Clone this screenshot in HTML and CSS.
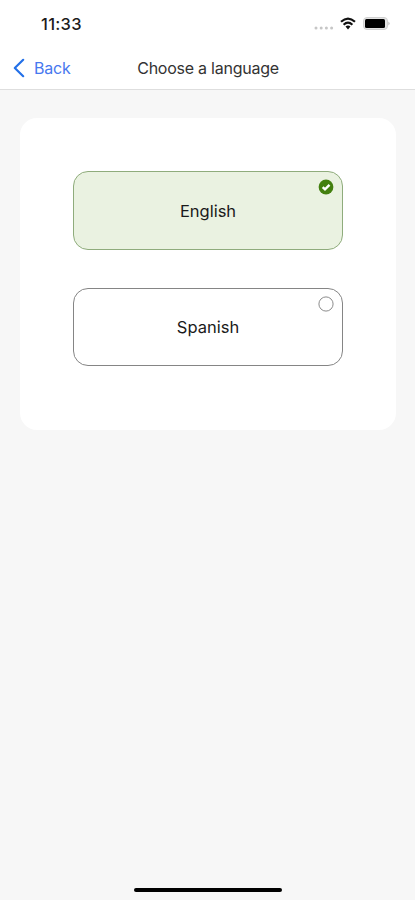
FILE: index.html
```html
<!DOCTYPE html>
<html lang="en">
<head>
<meta charset="utf-8">
<meta name="viewport" content="width=device-width, initial-scale=1">
<title>Choose a language</title>
<link rel="stylesheet" href="styles.css">
</head>
<body>
<div class="screen">
  <header class="top">
    <div class="status">
      <span class="time">11:33</span>
      <div class="indicators">
        <svg class="dots" width="20" height="4" viewBox="0 0 20 4"><g fill="#c6c6c6"><circle cx="2" cy="2" r="1.5"/><circle cx="7.2" cy="2" r="1.5"/><circle cx="12.4" cy="2" r="1.5"/><circle cx="17.6" cy="2" r="1.5"/></g></svg>
        <svg class="wifi" width="16" height="13" viewBox="0 0 16 13"><g fill="none" stroke="#111" stroke-width="2.2"><path d="M1 4.8Q8-1.7 15 4.8"/><path d="M3.6 7.7Q8 3.7 12.4 7.7"/></g><path d="M5.5 9.6Q8 7.5 10.5 9.6L8 12.4Z" fill="#111"/></svg>
        <svg class="battery" width="27" height="13" viewBox="0 0 27 13"><rect x=".5" y=".5" width="24" height="12" rx="3.5" fill="#e4e4e4" stroke="#d0d0d0"/><rect x="2" y="2" width="20" height="9" rx="1.5" fill="#000"/><path d="M25.5 4.5Q27.5 6.5 25.5 8.5Z" fill="#aaa"/></svg>
      </div>
    </div>
    <nav class="nav">
      <a class="back"><svg width="12" height="20" viewBox="0 0 12 20"><path d="M10.2 1.8 1.8 10l8.4 8.2" fill="none" stroke="#2370e8" stroke-width="2.2" stroke-linecap="round" stroke-linejoin="round"/></svg><span>Back</span></a>
      <h1 class="title">Choose a language</h1>
    </nav>
  </header>
  <main class="card">
    <button class="option selected"><span>English</span>
      <svg class="mark" width="16" height="16" viewBox="0 0 16 16"><circle cx="8" cy="8" r="7.4" fill="#43800f"/><path d="m4.7 8.1 2.3 2.3 4.5-4.5" fill="none" stroke="#fff" stroke-width="2.4"/></svg>
    </button>
    <button class="option"><span>Spanish</span>
      <svg class="mark" width="16" height="16" viewBox="0 0 16 16"><circle cx="8" cy="8" r="7.1" fill="#fff" stroke="#8c8c8c"/></svg>
    </button>
  </main>
  <div class="home"></div>
</div>
</body>
</html>
```
FILE: styles.css
```css
* { box-sizing: border-box; }
body {
  margin: 0;
  background: #f7f7f7;
  font-family: Inter, "Liberation Sans", sans-serif;
  color: #1c1c1c;
}
.screen {
  width: 415px;
  height: 900px;
  display: flex;
  flex-direction: column;
  overflow: hidden;
}
.top {
  height: 90px;
  background: #fff;
  border-bottom: 1px solid #dedede;
}
.status {
  height: 47px;
  padding: 1px 25px 0 41px;
  display: flex;
  align-items: center;
  justify-content: space-between;
}
.time { font-size: 16.5px; font-weight: 500; letter-spacing: .3px; }
.indicators { display: flex; align-items: center; margin-top: -1px; }
.dots { margin-top: 8px; }
.wifi { margin-left: 6px; }
.battery { margin-left: 7px; }
.nav {
  height: 42px;
  padding: 0 12px 0 13px;
  display: grid;
  grid-template-columns: 1fr auto 1fr;
  align-items: center;
}
.back {
  display: flex;
  align-items: center;
  gap: 9px;
  font-size: 16px;
  letter-spacing: -.2px;
  color: #4778ef;
}
.title {
  margin: 0;
  font-size: 16px;
  font-weight: 400;
  letter-spacing: -.25px;
  color: #333;
}
.card {
  width: 376px;
  height: 312px;
  margin: 28px 0 0 20px;
  padding: 53px 53px 0;
  border-radius: 17px;
  background: #fff;
  display: flex;
  flex-direction: column;
  gap: 38px;
}
.option {
  position: relative;
  height: 78px;
  padding: 0;
  border: 1px solid #858585;
  border-radius: 15px;
  background: #fff;
  color: #1a1a1a;
  font: 400 16.5px Inter, "Liberation Sans", sans-serif;
}
.selected { height: 79px; background: #eaf2e1; border-color: #8fac7c; }
.mark { position: absolute; top: 7px; right: 8px; }
.home {
  width: 148px;
  height: 4px;
  margin: auto auto 8px 134px;
  border-radius: 2px;
  background: #000;
}
```
